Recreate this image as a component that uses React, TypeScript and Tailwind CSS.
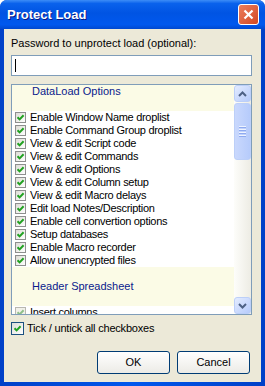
const options = [
  "Enable Window Name droplist",
  "Enable Command Group droplist",
  "View & edit Script code",
  "View & edit Commands",
  "View & edit Options",
  "View & edit Column setup",
  "View & edit Macro delays",
  "Edit load Notes/Description",
  "Enable cell convertion options",
  "Setup databases",
  "Enable Macro recorder",
  "Allow unencrypted files",
];

function Tick({ color = "#21a121" }: { color?: string }) {
  return (
    <svg width="9" height="9" viewBox="0 0 9 9">
      <path d="M1.5 4.2 L3.6 6.4 L7.6 2.2" fill="none" stroke={color} strokeWidth="2" />
    </svg>
  );
}

function ListCheck({ disabled }: { disabled?: boolean }) {
  return (
    <div
      className={
        "w-[11px] h-[11px] shrink-0 border flex items-center justify-center " +
        (disabled
          ? "border-[#b8b8b0] bg-[#f2f1ea]"
          : "border-[#8e8f8f] bg-gradient-to-br from-[#dddcd6] to-white")
      }
    >
      <Tick color={disabled ? "#8fbf8a" : "#21a121"} />
    </div>
  );
}

function Header({ label }: { label: string }) {
  return (
    <div className="h-[39px] bg-[#fbfbe6] flex items-center pl-[20px] text-[#0a1a8c]">
      {label}
    </div>
  );
}

function Row({ label, disabled }: { label: string; disabled?: boolean }) {
  return (
    <div className="h-[13px] flex items-center pl-[3px] gap-[4px] leading-[13px] whitespace-nowrap tracking-[-0.3px]">
      <ListCheck disabled={disabled} />
      <span>{label}</span>
    </div>
  );
}

function ScrollBtn({ up }: { up?: boolean }) {
  return (
    <div className="h-[17px] rounded-[3px] border border-[#bccff8] bg-gradient-to-br from-[#e4ecff] to-[#b6cbfb] flex items-center justify-center">
      <svg width="9" height="6" viewBox="0 0 9 6">
        <path
          d={up ? "M1 5 L4.5 1.5 L8 5" : "M1 1 L4.5 4.5 L8 1"}
          fill="none"
          stroke="#4d6185"
          strokeWidth="2"
        />
      </svg>
    </div>
  );
}

export default function App() {
  return (
    <div className="w-[265px] h-[386px] flex flex-col bg-gradient-to-r from-[#0040c8] via-[#0058ee] to-[#0040c8] rounded-t-[7px] overflow-hidden font-['Liberation_Sans',Arial,sans-serif]">
      <div className="h-[29px] shrink-0 flex items-center justify-between pl-[7px] pr-[6px] bg-[linear-gradient(180deg,#3d8df7_0%,#0a62ec_12%,#0054e3_45%,#0058ee_85%,#0048cf_100%)]">
        <span className="text-white font-bold text-[13px] [text-shadow:1px_1px_#0a1883]">Protect Load</span>
        <div className="w-[21px] h-[21px] rounded-[3px] border border-white bg-gradient-to-br from-[#ec7e5c] to-[#d2461f] flex items-center justify-center">
          <svg width="11" height="11" viewBox="0 0 11 11">
            <path d="M1.5 1.5 L9.5 9.5 M9.5 1.5 L1.5 9.5" stroke="white" strokeWidth="2.2" />
          </svg>
        </div>
      </div>

      <div className="flex-1 mx-[4px] mb-[4px] bg-[#ece9d8] pl-[7px] pr-[9px] pt-[8px] flex flex-col text-[11px] text-black">
        <div className="h-[13px] leading-[13px]">Password to unprotect load (optional):</div>
        <div className="mt-[5px] h-[21px] border border-[#7f9db9] bg-white flex items-center pl-[3px]">
          <div className="w-px h-[13px] bg-black" />
        </div>

        <div className="mt-[8px] h-[231px] border border-[#7f9db9] bg-white flex">
          <div className="flex-1 overflow-hidden">
            <div className="-mt-[13px]">
              <Header label="DataLoad Options" />
              {options.map((o) => (
                <Row key={o} label={o} />
              ))}
              <Header label="Header Spreadsheet" />
              <Row label="Insert columns" disabled />
            </div>
          </div>
          <div className="w-[17px] shrink-0 flex flex-col bg-gradient-to-r from-[#fdfdfa] to-[#edece4]">
            <ScrollBtn up />
            <div className="mt-[1px] h-[57px] rounded-[3px] border border-[#bccff8] bg-gradient-to-r from-[#c9d8fd] to-[#b6cbfb] flex flex-col items-center justify-center gap-[1px]">
              {[0, 1, 2, 3].map((i) => (
                <div key={i} className="w-[7px] h-px bg-[#eef3ff] border-b border-[#8faaf0] box-content" />
              ))}
            </div>
            <div className="flex-1" />
            <ScrollBtn />
          </div>
        </div>

        <div className="mt-[7px] h-[13px] flex items-center gap-[3px]">
          <div className="w-[13px] h-[13px] border border-[#1c5180] bg-gradient-to-br from-[#dcdcd7] to-white flex items-center justify-center">
            <Tick />
          </div>
          <span className="tracking-[-0.2px]">Tick / untick all checkboxes</span>
        </div>

        <div className="mt-[16px] flex justify-end gap-[7px] pr-[2px]">
          <button className="w-[73px] h-[23px] rounded-[3px] border border-[#003c74] bg-gradient-to-b from-white to-[#ecebe6] text-[11px]">
            OK
          </button>
          <button className="w-[73px] h-[23px] rounded-[3px] border border-[#003c74] bg-gradient-to-b from-white to-[#ecebe6] text-[11px]">
            Cancel
          </button>
        </div>
      </div>
    </div>
  );
}
